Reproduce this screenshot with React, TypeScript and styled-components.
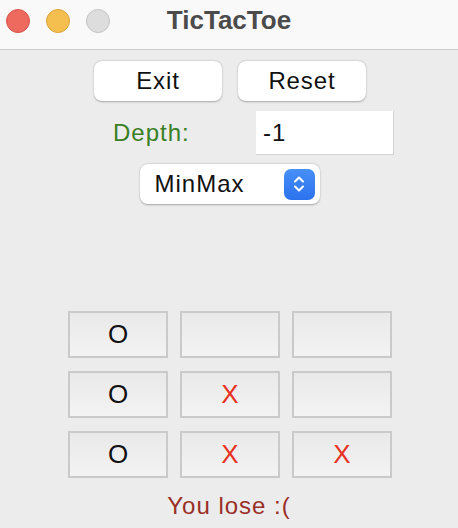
import React from "react";
import styled, { createGlobalStyle } from "styled-components";

const board: string[] = ["O", "", "", "O", "X", "", "O", "X", "X"];

function App() {
  return (
    <>
      <GlobalStyle />
      <Window>
        <TitleBar>
          <Lights>
            <Light $fill="#ee6a5f" $ring="#d5544a" />
            <Light $fill="#f5bf4f" $ring="#d9a43c" />
            <Light $fill="#dddddd" $ring="#c4c4c4" />
          </Lights>
          <Title>TicTacToe</Title>
        </TitleBar>
        <Content>
          <ButtonRow>
            <PushButton>Exit</PushButton>
            <PushButton>Reset</PushButton>
          </ButtonRow>
          <DepthRow>
            <DepthLabel>Depth:</DepthLabel>
            <DepthInput defaultValue="-1" />
          </DepthRow>
          <Select>
            <span>MinMax</span>
            <Stepper>
              <svg width="14" height="22" viewBox="0 0 14 22">
                <path
                  d="M3 8.5 L7 4.5 L11 8.5 M3 13.5 L7 17.5 L11 13.5"
                  fill="none"
                  stroke="#fff"
                  strokeWidth="2"
                  strokeLinecap="round"
                  strokeLinejoin="round"
                />
              </svg>
            </Stepper>
          </Select>
          <Board>
            {board.map((mark, i) => (
              <Cell key={i} $mark={mark}>
                {mark}
              </Cell>
            ))}
          </Board>
          <Status>You lose :(</Status>
        </Content>
      </Window>
    </>
  );
}

const GlobalStyle = createGlobalStyle`
  html, body {
    margin: 0;
    padding: 0;
    background: #ececec;
  }
  body {
    font-family: "Liberation Sans", Arial, sans-serif;
  }
`;

const Window = styled.div`
  width: 458px;
  height: 528px;
  background: #ececec;
  overflow: hidden;
  display: flex;
  flex-direction: column;
`;

const TitleBar = styled.div`
  height: 50px;
  box-sizing: border-box;
  background: #f9f9f9;
  border-bottom: 1px solid #cbcbcb;
  display: flex;
  align-items: center;
  justify-content: center;
  position: relative;
`;

const Lights = styled.div`
  position: absolute;
  left: 6px;
  top: 9px;
  display: flex;
  gap: 16px;
`;

const Light = styled.div<{ $fill: string; $ring: string }>`
  width: 24px;
  height: 24px;
  box-sizing: border-box;
  border-radius: 50%;
  background: ${(p) => p.$fill};
  border: 1px solid ${(p) => p.$ring};
`;

const Title = styled.div`
  font-size: 26px;
  font-weight: bold;
  color: #4b4b4b;
  margin-top: -8px;
`;

const Content = styled.div`
  display: flex;
  flex-direction: column;
  align-items: center;
  padding-top: 11px;
  font-size: 24px;
  letter-spacing: 1px;
`;

const ButtonRow = styled.div`
  display: flex;
  gap: 16px;
  margin-left: 2px;
`;

const PushButton = styled.button`
  width: 128px;
  height: 40px;
  border: none;
  border-radius: 8px;
  background: #fff;
  box-shadow: 0 0.5px 2px rgba(0, 0, 0, 0.3);
  font-family: "Liberation Sans", Arial, sans-serif;
  font-size: 24px;
  letter-spacing: 0.9px;
  color: #111;
  padding: 0;
`;

const DepthRow = styled.div`
  width: 300px;
  margin-top: 10px;
  margin-left: 30px;
  display: flex;
  align-items: center;
  justify-content: space-between;
`;

const DepthLabel = styled.div`
  padding-left: 19px;
  color: #3a7f25;
`;

const DepthInput = styled.input`
  width: 138px;
  height: 44px;
  box-sizing: border-box;
  border: none;
  border-bottom: 1px solid #d4d4d4;
  border-right: 1px solid #d4d4d4;
  background: #fff;
  font-family: "Liberation Sans", Arial, sans-serif;
  font-size: 24px;
  letter-spacing: 1px;
  color: #111;
  padding: 0 7px;
  outline: none;
`;

const Select = styled.div`
  margin-top: 9px;
  margin-left: 1px;
  width: 180px;
  height: 40px;
  box-sizing: border-box;
  background: #fff;
  border-radius: 8px;
  box-shadow: 0 0.5px 2px rgba(0, 0, 0, 0.3);
  display: flex;
  align-items: center;
  justify-content: space-between;
  padding: 0 5px 0 15px;
  color: #111;
`;

const Stepper = styled.div`
  width: 31px;
  height: 31px;
  border-radius: 7px;
  background: linear-gradient(#4790f7, #2c72ee);
  display: flex;
  align-items: center;
  justify-content: center;
`;

const Board = styled.div`
  margin-top: 107px;
  margin-left: 2px;
  display: grid;
  grid-template-columns: repeat(3, 100px);
  grid-auto-rows: 47px;
  column-gap: 12px;
  row-gap: 13px;
`;

const Cell = styled.div<{ $mark: string }>`
  box-sizing: border-box;
  border: 2px solid #cacaca;
  background: linear-gradient(#e9e9e9, #f3f3f3);
  display: flex;
  align-items: center;
  justify-content: center;
  font-size: 26px;
  letter-spacing: 0;
  color: ${(p) => (p.$mark === "X" ? "#e8321f" : "#111")};
`;

const Status = styled.div`
  margin-top: 14px;
  color: #9a2f28;
`;

export default App;
